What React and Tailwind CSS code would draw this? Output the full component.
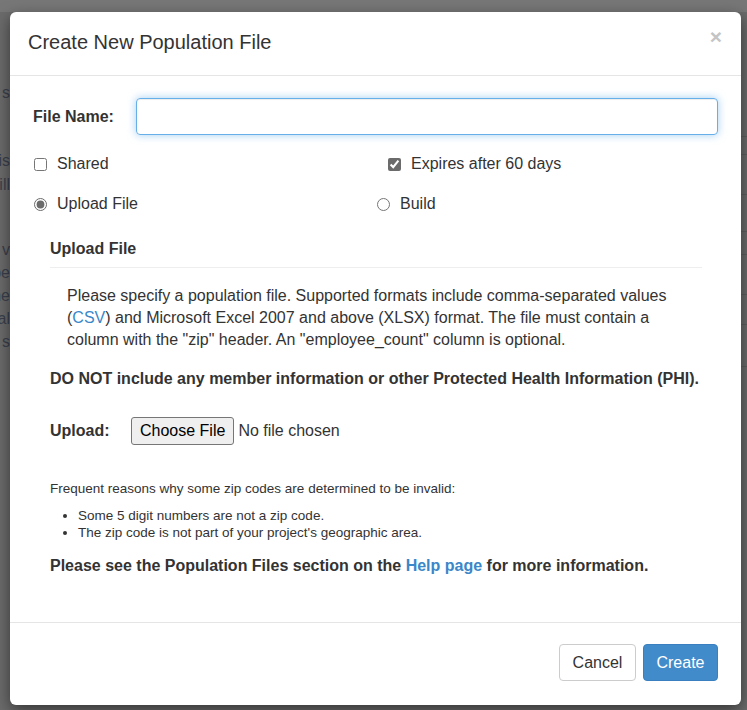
import React from "react";

const BG_LINES = [
  { text: "s", mt: "mt-[70px]" },
  { text: "this", mt: "mt-[46px]" },
  { text: "will", mt: "mt-[2px]" },
  { text: "a v", mt: "mt-[43px]" },
  { text: "be", mt: "mt-[1px]" },
  { text: "one", mt: "mt-[1px]" },
  { text: "total", mt: "mt-[1px]" },
  { text: "the s", mt: "mt-[1px]" },
];

const RIGHT_ROWS = ["h-[125px]", "h-[18px]", "h-[40px]", "h-[37px]", "h-[23px]", "h-[40px]", "h-[30px]", "h-[42px]"];

function Checkbox({ checked, label, className = "" }) {
  return (
    <label className={`flex items-center gap-[10px] ${className}`}>
      <input type="checkbox" defaultChecked={checked} className="m-0 h-[13px] w-[13px] accent-[#6b6b6b]" />
      <span>{label}</span>
    </label>
  );
}

function Radio({ checked, label, className = "" }) {
  return (
    <label className={`flex items-center gap-[10px] ${className}`}>
      <input type="radio" name="mode" defaultChecked={checked} className="m-0 h-[13px] w-[13px] accent-[#6b6b6b]" />
      <span>{label}</span>
    </label>
  );
}

export default function App() {
  return (
    <div className="relative h-[710px] w-full overflow-hidden bg-[#6b6b6b] font-['Liberation_Sans',Arial,sans-serif]">
      {/* page behind the overlay */}
      <div className="h-[12px] bg-[#777777]" />
      <div className="flex justify-between">
        <div className="w-[10px] overflow-hidden text-[16px] leading-[22px] text-[#3b404c]">
          {BG_LINES.map((l, i) => (
            <div key={i} className={`flex justify-end whitespace-nowrap ${l.mt}`}>{l.text}</div>
          ))}
        </div>
        <div className="w-[6px]">
          {RIGHT_ROWS.map((h, i) => (
            <div key={i} className={`${h} border-b border-[#5f5f5f]`} />
          ))}
        </div>
      </div>

      {/* modal */}
      <div className="absolute left-[10px] top-[12px] w-[731px] rounded-[6px] bg-white text-[16px] text-[#333333] shadow-[0_5px_15px_rgba(0,0,0,0.5)]">
        <div className="flex items-start justify-between border-b border-[#e5e5e5] pb-[20px] pl-[18px] pr-[19px] pt-[17px]">
          <h4 className="text-[20px] leading-[26px]">Create New Population File</h4>
          <button className="-mt-[3px] text-[21px] font-bold leading-[21px] text-[#c4c4c4]">×</button>
        </div>

        <div className="pb-[45px] pl-[23px] pr-[23px] pt-[22px]">
          <div className="flex items-center">
            <label className="w-[103px] font-bold">File Name:</label>
            <input
              type="text"
              className="h-[37px] flex-1 rounded-[4px] border border-[#66afe9] px-3 outline-none shadow-[inset_0_1px_1px_rgba(0,0,0,0.075),0_0_8px_rgba(102,175,233,0.6)]"
            />
          </div>

          <div className="mt-[17px] grid h-[22px] grid-cols-[343px_1fr] pl-[1px]">
            <Checkbox label="Shared" />
            <Checkbox checked label="Expires after 60 days" className="ml-[11px]" />
          </div>

          <div className="mt-[18px] grid h-[22px] grid-cols-[343px_1fr] pl-[1px]">
            <Radio checked label="Upload File" />
            <Radio label="Build" />
          </div>

          <div className="ml-[17px] mr-[16px] mt-[24px]">
            <h5 className="border-b border-[#eeeeee] pb-[7px] font-bold leading-[22px]">Upload File</h5>
            <p className="mt-[17px] pl-[17px] leading-[22px]">
              Please specify a population file. Supported formats include comma-separated values (
              <a className="text-[#3a87c9]">CSV</a>) and Microsoft Excel 2007 and above (XLSX) format. The file must contain a
              column with the "zip" header. An "employee_count" column is optional.
            </p>
            <p className="mt-[17px] font-bold leading-[22px]">
              DO NOT include any member information or other Protected Health Information (PHI).
            </p>

            <div className="mt-[27px] flex h-[28px] items-center">
              <span className="w-[81px] font-bold">Upload:</span>
              <button className="h-[28px] rounded-[3px] border border-[#767676] bg-[#efefef] px-[8px] text-[16px] text-black">
                Choose File
              </button>
              <span className="ml-[4px]">No file chosen</span>
            </div>

            <p className="mt-[35px] text-[13.5px] leading-[18px]">
              Frequent reasons why some zip codes are determined to be invalid:
            </p>
            <ul className="mt-[9px] list-disc pl-[28px] text-[13.5px] leading-[17px]">
              <li>Some 5 digit numbers are not a zip code.</li>
              <li>The zip code is not part of your project's geographic area.</li>
            </ul>

            <p className="mt-[14px] font-bold leading-[22px]">
              Please see the Population Files section on the <a className="text-[#3a87c9]">Help page</a> for more information.
            </p>
          </div>
        </div>

        <div className="flex justify-end gap-[7px] border-t border-[#e5e5e5] pb-[24px] pr-[23px] pt-[21px]">
          <button className="h-[37px] w-[77px] rounded-[4px] border border-[#cccccc] bg-white text-[16px] text-[#333333]">
            Cancel
          </button>
          <button className="h-[37px] w-[75px] rounded-[4px] border border-[#3a7fc0] bg-[#428bca] text-[16px] text-white">
            Create
          </button>
        </div>
      </div>
    </div>
  );
}
